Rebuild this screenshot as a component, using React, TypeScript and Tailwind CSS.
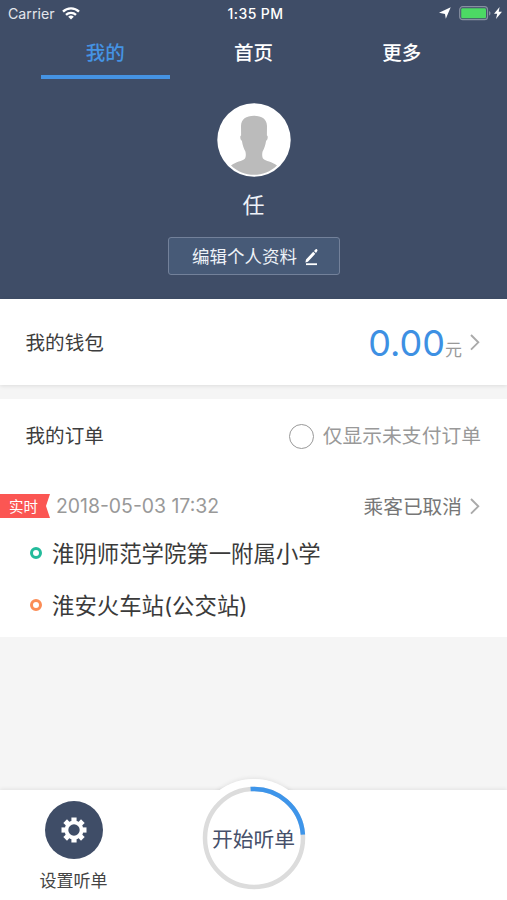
import React from 'react';

interface Order {
  id: number;
  tag: string;
  time: string;
  status: string;
  from: string;
  to: string;
}

const TABS = ['我的', '首页', '更多'];

const ORDERS: Order[] = [
  { id: 1, tag: '实时', time: '2018-05-03 17:32', status: '乘客已取消', from: '淮阴师范学院第一附属小学', to: '淮安火车站(公交站)' },
];

const GEAR_TEETH = [0, 45, 90, 135, 180, 225, 270, 315];

const WifiIcon: React.FC = () => (
  <svg className="w-[18px] h-[13px]" viewBox="0 0 18 13" fill="none" stroke="#fff" strokeWidth="2.3">
    <path d="M1 4.600a11.300 11.300 0 0 1 16 0" />
    <path d="M4 7.900a7.100 7.100 0 0 1 10 0" />
    <path d="M9 12.600 6.200 9.800a4 4 0 0 1 5.600 0z" fill="#fff" stroke="none" />
  </svg>
);

const LocationIcon: React.FC = () => (
  <svg className="w-3 h-3" viewBox="0 0 12 12" fill="#fff">
    <path d="M11.700.3 6.800 11.800 6 7 0 5.800z" />
  </svg>
);

const BatteryIcon: React.FC = () => (
  <svg className="w-8 h-[15px]" viewBox="0 0 32 15" fill="none">
    <rect x="0.7" y="0.7" width="27.8" height="13" rx="3" stroke="#8790a1" strokeWidth="1.2" />
    <rect x="2.2" y="2.2" width="24.8" height="10" rx="1.3" fill="#4cd964" />
    <path d="M30 5v4.6c1-.4 1.5-1.300 1.500-2.300S31 5.400 30 5z" fill="#8790a1" />
  </svg>
);

const BoltIcon: React.FC = () => (
  <svg className="w-2 h-3" viewBox="0 0 8 12" fill="#fff">
    <path d="M5.600 0 0 6.800h3.200L2 12l6-7.200H4.700z" />
  </svg>
);

const AvatarIcon: React.FC = () => (
  <svg className="w-[74px] h-[74px]" viewBox="0 0 74 74">
    <circle cx="37" cy="37" r="36.700" fill="#fff" />
    <path
      fill="#bbb"
      d="M37 12.700c8 0 12.800 3.300 13 10.300l-.1 9.500c1.400.2.900 4.500-.8 5.300-.7 4.500-1.900 8-3.500 10.700-.6 2.300-.6 5.500.4 7 2.500 2.700 9.300 3.200 14 6.900C53.500 68.600 45.500 71.800 37 71.800S20.500 68.600 14 62.400c4.700-3.700 11.500-4.200 14-6.900 1-1.500 1-4.700.4-7-1.600-2.700-2.800-6.200-3.500-10.700-1.700-.8-2.200-5.100-.8-5.300L24 23c.2-7 5-10.300 13-10.300z"
    />
  </svg>
);

const PencilIcon: React.FC = () => (
  <svg className="w-4 h-[17px]" viewBox="0 0 16 17" fill="#fff">
    <path d="M2 14.300h11v1.800H2z" />
    <path d="M1.400 13.500 2 10.500 9.200 2.800l2.100 2L3.900 12.700zM10 2 11.700.3c.4-.4.900-.3 1.400.2s.6 1 .2 1.400L12 4z" />
  </svg>
);

const ChevronIcon: React.FC = () => (
  <svg className="w-[11px] h-[18px]" viewBox="0 0 11 18" fill="none" stroke="#aaa" strokeWidth="1.9">
    <path d="m1 2 7.300 7.300L1 16.600" />
  </svg>
);

const GearIcon: React.FC = () => (
  <svg className="w-[26px] h-[26px]" viewBox="-13 -13 26 26">
    <circle r="7.600" fill="none" stroke="#fff" strokeWidth="3.800" />
    {GEAR_TEETH.map(angle => (
      <path key={angle} d="M-2.600-8.500V-12.500h5.200v4z" fill="#fff" transform={`rotate(${angle})`} />
    ))}
  </svg>
);

const StatusBar: React.FC = () => (
  <div className="grid grid-cols-3 items-center h-7 pl-2 pr-[5px] text-[14.2px] text-white">
    <div className="flex items-center gap-[7px]">
      <span className="text-[#e3e6ec]">Carrier</span>
      <WifiIcon />
    </div>
    <span className="pl-px -mt-px text-center text-[14px] font-medium tracking-[0.4px]">1:35 PM</span>
    <div className="flex items-center justify-end -mt-[2px]">
      <LocationIcon />
      <span className="w-2" />
      <BatteryIcon />
      <span className="w-[3px]" />
      <BoltIcon />
    </div>
  </div>
);

const Header: React.FC = () => (
  <header className="h-[299px] bg-[#3f4d67] flex flex-col shrink-0">
    <StatusBar />
    <nav className="grid grid-cols-3 h-[51px] px-[31px] text-[19.5px] font-medium">
      {TABS.map((tab, i) => (
        <button
          key={tab}
          className={`mx-[9.700px] h-[51px] pt-[5px] leading-none border-b-4 ${i === 0 ? 'text-[#4593e3] border-[#4593e3]' : 'text-white border-transparent'}`}
        >
          {tab}
        </button>
      ))}
    </nav>
    <div className="flex flex-col items-center pt-6">
      <AvatarIcon />
      <p className="mt-[13px] h-[30px] leading-[30px] text-[22px] text-[#eef2f8]">任</p>
      <button className="mt-[17px] w-[172px] h-[38px] pl-[5px] pt-[2px] flex items-center justify-center gap-[7px] rounded-[3px] border border-[#73819a] bg-[#475a77] text-[17.5px] text-[#eef2f8]">
        编辑个人资料
        <PencilIcon />
      </button>
    </div>
  </header>
);

const OrderCard: React.FC<{ order: Order }> = ({ order }) => (
  <article>
    <div className="flex items-center h-[26px] pr-[26px]">
      <div className="w-[50px] h-6 bg-[#fb5653] text-white text-[14.5px] leading-[25px] pl-[9px] [clip-path:polygon(0_0,100%_0,92%_50%,100%_100%,0_100%)]">
        {order.tag}
      </div>
      <span className="ml-[6px] pt-px text-[19.4px] text-[#999]">{order.time}</span>
      <span className="ml-auto mr-[8px] pt-[3px] text-[19.7px] text-[#777]">{order.status}</span>
      <ChevronIcon />
    </div>
    <div className="mt-[7px] pl-[30px] text-[22.4px] text-[#3a3a3a]">
      <div className="flex items-center gap-[10px] h-[53px]">
        <i className="w-3 h-3 rounded-full border-[3px] border-[#23bb9b]" />
        <span className="pt-[2px]">{order.from}</span>
      </div>
      <div className="flex items-center gap-[10px] h-[52px]">
        <i className="w-3 h-3 rounded-full border-[3px] border-[#fb8c55]" />
        <span className="pt-[2px]">{order.to}</span>
      </div>
    </div>
  </article>
);

const BottomBar: React.FC = () => (
  <footer className="relative mt-auto h-[110px] bg-white shadow-[0_-1px_4px_rgba(0,0,0,0.08)]">
    <div className="absolute left-[195px] -top-[11px] w-[118px] h-[118px] rounded-full shadow-[0_-1px_4px_rgba(0,0,0,0.08)]" />
    <div className="absolute inset-0 bg-white" />
    <button className="absolute left-[195px] -top-[11px] w-[118px] h-[118px] rounded-full bg-white flex items-center justify-center text-[20.8px] text-[#46506a]">
      <svg className="absolute inset-0" viewBox="-59 -59 118 118" fill="none" strokeWidth="4.500">
        <circle r="49" stroke="#dcdcdc" />
        <path d="M-3.400-48.900A49 49 0 0 1 48.900-3.400" stroke="#3e95ea" />
      </svg>
      <span className="relative pt-[3px] pr-px whitespace-nowrap">开始听单</span>
    </button>
    <div className="relative w-[147px] pt-[11px] flex flex-col items-center">
      <div className="w-[58px] h-[58px] rounded-full bg-[#3f4d67] flex items-center justify-center">
        <GearIcon />
      </div>
      <span className="mt-[10px] h-6 leading-6 text-[17px] text-[#444]">设置听单</span>
    </div>
  </footer>
);

const App: React.FC = () => {
  return (
    <div className="w-full h-[900px] flex flex-col overflow-hidden bg-[#f5f5f5] font-['Inter','Noto_Sans_CJK_SC',sans-serif]">
      <Header />
      <section className="flex items-center h-[86px] shrink-0 pl-[25.500px] pr-[26px] bg-white shadow-[0_1px_4px_rgba(0,0,0,0.1)]">
        <h2 className="pt-[3px] text-[19.6px] text-[#3d3d3d]">我的钱包</h2>
        <div className="ml-auto mr-[8px] pt-[2px] flex items-baseline">
          <span className="text-[36px] leading-none text-[#3d90e3]">0.00</span>
          <span className="text-[17px] leading-none text-[#999]">元</span>
        </div>
        <ChevronIcon />
      </section>
      <section className="mt-[14px] h-[238px] shrink-0 bg-white">
        <div className="flex items-center h-[74px] pl-[25.500px] pr-[26px] text-[19.8px]">
          <h2 className="pt-[2px] text-[19.6px] text-[#3d3d3d]">我的订单</h2>
          <label className="ml-auto flex items-center gap-[9px] text-[#999]">
            <span className="w-[25px] h-[25px] rounded-full border-[1.5px] border-[#999]" />
            <span className="pt-[2px]">仅显示未支付订单</span>
          </label>
        </div>
        <div className="pt-5">
          {ORDERS.map(order => (
            <OrderCard key={order.id} order={order} />
          ))}
        </div>
      </section>
      <BottomBar />
    </div>
  );
};

export default App;
